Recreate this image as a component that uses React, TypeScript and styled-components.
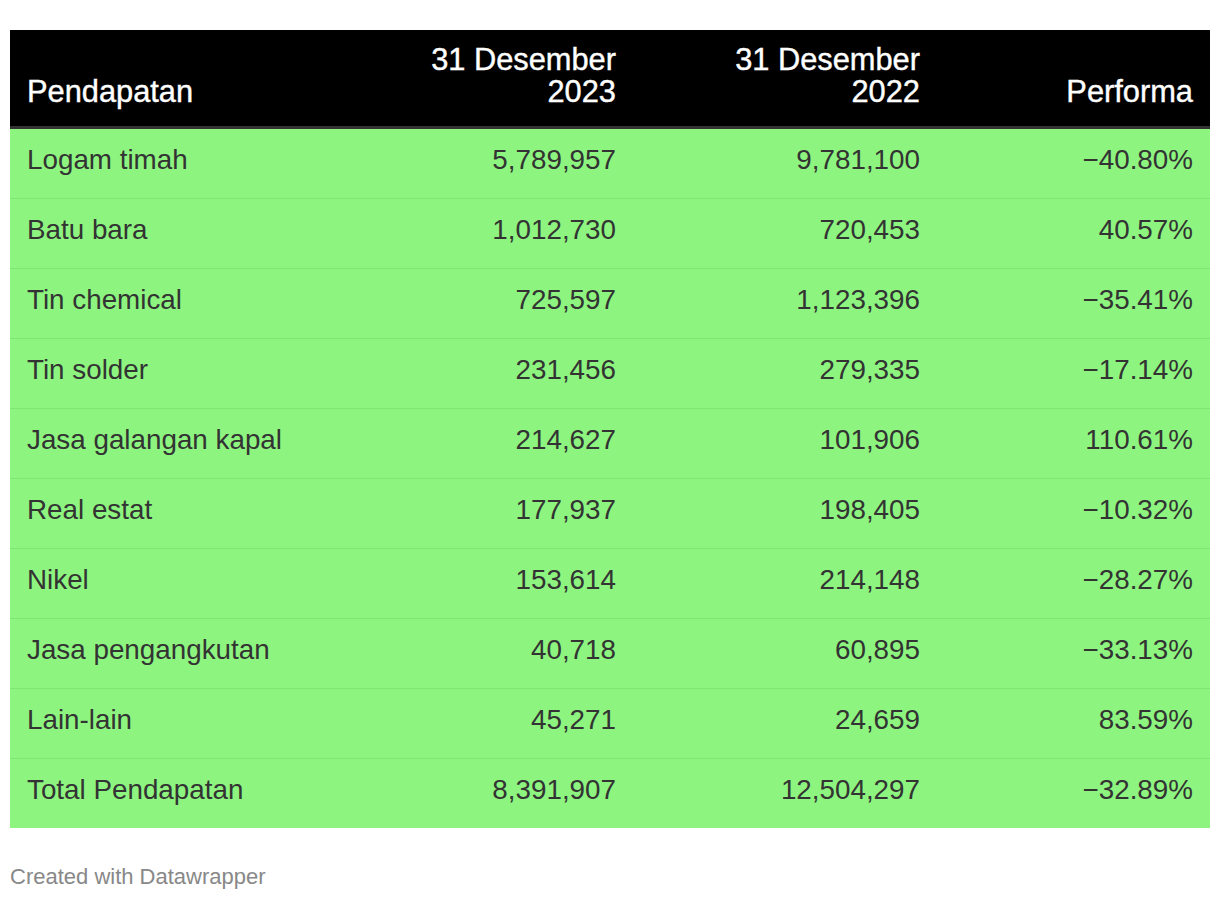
import React from "react";
import styled, { createGlobalStyle } from "styled-components";

const GlobalStyle = createGlobalStyle`
  html, body {
    margin: 0;
    padding: 0;
    background: #ffffff;
  }
  body {
    font-family: "Liberation Sans", Arial, Helvetica, sans-serif;
  }
`;

const Page = styled.div`
  padding: 30px 10px 0 10px;
  width: 1200px;
`;

const Table = styled.div`
  display: flex;
  flex-direction: column;
  width: 1200px;
`;

const cols = "319px 304px 304px 273px";

const HeaderRow = styled.div`
  display: grid;
  grid-template-columns: ${cols};
  background: #000000;
  border-bottom: 3px solid #333333;
`;

const HeaderCell = styled.div<{ $align?: "left" | "right" }>`
  display: flex;
  flex-direction: column;
  justify-content: flex-end;
  align-items: ${(p) => (p.$align === "right" ? "flex-end" : "flex-start")};
  text-align: ${(p) => p.$align ?? "left"};
  padding: 14px 17px 18px 17px;
  color: #ffffff;
  font-size: 30.8px;
  line-height: 32px;
  font-weight: 400;
  -webkit-text-stroke: 0.4px #ffffff;
  min-height: 64px;
`;

const BodyRow = styled.div<{ $last?: boolean }>`
  display: grid;
  grid-template-columns: ${cols};
  background: #8df57f;
  border-bottom: ${(p) => (p.$last ? "none" : "1px solid #80e673")};
`;

const Cell = styled.div<{ $align?: "left" | "right" }>`
  padding: 15px 17px 22px 17px;
  font-size: 27.8px;
  line-height: 32px;
  color: #333333;
  text-align: ${(p) => p.$align ?? "left"};
  white-space: nowrap;
`;

const Footer = styled.div`
  margin-top: 36px;
  font-size: 22px;
  line-height: 26px;
  color: #888888;
`;

type Row = [string, string, string, string];

const rows: Row[] = [
  ["Logam timah", "5,789,957", "9,781,100", "\u221240.80%"],
  ["Batu bara", "1,012,730", "720,453", "40.57%"],
  ["Tin chemical", "725,597", "1,123,396", "\u221235.41%"],
  ["Tin solder", "231,456", "279,335", "\u221217.14%"],
  ["Jasa galangan kapal", "214,627", "101,906", "110.61%"],
  ["Real estat", "177,937", "198,405", "\u221210.32%"],
  ["Nikel", "153,614", "214,148", "\u221228.27%"],
  ["Jasa pengangkutan", "40,718", "60,895", "\u221233.13%"],
  ["Lain-lain", "45,271", "24,659", "83.59%"],
  ["Total Pendapatan", "8,391,907", "12,504,297", "\u221232.89%"],
];

export default function App() {
  return (
    <>
      <GlobalStyle />
      <Page>
        <Table>
          <HeaderRow>
            <HeaderCell>Pendapatan</HeaderCell>
            <HeaderCell $align="right">
              <span>31 Desember</span>
              <span>2023</span>
            </HeaderCell>
            <HeaderCell $align="right">
              <span>31 Desember</span>
              <span>2022</span>
            </HeaderCell>
            <HeaderCell $align="right">Performa</HeaderCell>
          </HeaderRow>
          {rows.map((r, i) => (
            <BodyRow key={r[0]} $last={i === rows.length - 1}>
              <Cell>{r[0]}</Cell>
              <Cell $align="right">{r[1]}</Cell>
              <Cell $align="right">{r[2]}</Cell>
              <Cell $align="right">{r[3]}</Cell>
            </BodyRow>
          ))}
        </Table>
        <Footer>Created with Datawrapper</Footer>
      </Page>
    </>
  );
}
